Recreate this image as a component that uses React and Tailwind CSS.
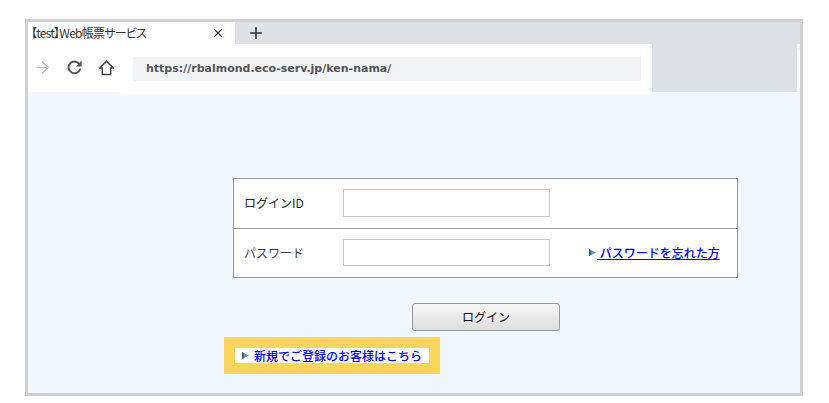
import { X, Plus, ArrowRight } from 'lucide-react'

const JP = "font-['Meiryo','Noto_Sans_CJK_JP','Liberation_Sans',sans-serif]"

function Marker() {
  return (
    <svg width="7" height="7" viewBox="0 0 8 8" className="flex-shrink-0">
      <path d="M0 0 L8 4 L0 8 Z" fill="#5b9bd5" />
      <path d="M0 0 L2 1 L2 7 L0 8 Z" fill="#44546a" />
    </svg>
  )
}

function ReloadIcon() {
  return (
    <svg width="15" height="15" viewBox="0 0 15 15" fill="none">
      <path d="M12.4 4.2 A5.9 5.9 0 1 0 13.2 8.6" stroke="#555" strokeWidth="2" />
      <path d="M14.6 0.8 V6.6 H8.8 Z" fill="#555" />
    </svg>
  )
}

function HomeIcon() {
  return (
    <svg width="15" height="16" viewBox="0 0 15 16" fill="none" stroke="#444" strokeWidth="1.5">
      <path d="M0.9 8 L7.5 1.2 L14.1 8 H11.7 V14.6 H3.3 V8 Z" />
    </svg>
  )
}

function Toolbar() {
  return (
    <div className="flex items-start h-[50px]">
      <div className="w-[92px] h-[48px] bg-white flex items-center pl-[5px] pb-[1px] flex-shrink-0">
        <ArrowRight size={19} strokeWidth={1.5} className="text-[#bdbdbd]" />
        <span className="ml-[15px] flex"><ReloadIcon /></span>
        <span className="ml-[17px] flex"><HomeIcon /></span>
      </div>
      <div className="w-[532px] h-[50px] bg-white pt-[13px] flex-shrink-0">
        <div className="ml-[13px] w-[508px] h-[24px] bg-[#f1f3f4] flex items-center pl-[13px]">
          <span className="font-['DejaVu_Sans',sans-serif] font-bold text-[11px] text-[#555]">https://rbalmond.eco-serv.jp/ken-nama/</span>
        </div>
      </div>
      <div className="w-[145px] h-[48px] bg-[#dee1e6] flex-shrink-0" />
      <div className="flex-1 h-[47px] pt-[6px]">
        <div className="h-[41px] bg-white" />
      </div>
    </div>
  )
}

function FormRow({ label, last, children, labelClass }) {
  return (
    <div className={`flex items-center bg-white ${last ? 'h-[48px] pb-[1px]' : 'h-[50px] pb-[1px] border-b border-[#999]'}`}>
      <span className={`w-[109px] pl-[10px] text-[12px] ${labelClass}`}>{label}</span>
      <input type="text" className={`w-[207px] bg-white border border-[#c8c8c8] ${last ? 'h-[27px]' : 'h-[28px]'}`} />
      {children}
    </div>
  )
}

export default function App() {
  return (
    <div className={`w-[829px] h-[403px] bg-white pt-[19px] pl-[25px] overflow-hidden ${JP}`}>
      <div className="w-[778px] h-[377px] border-[3px] border-[#d0d0d0] bg-[#f3f8fe] flex flex-col">
        <div className="h-[22px] bg-[#dee1e6] flex items-center flex-shrink-0">
          <div className="w-[207px] h-full bg-white flex items-center pl-[3px] pr-[10px] justify-between">
            <span className="text-[12px] text-[#333] whitespace-nowrap tracking-[-0.75px] [font-feature-settings:'palt']">【test】Web帳票サービス</span>
            <X size={14} strokeWidth={2} className="text-[#333]" />
          </div>
          <Plus size={18} strokeWidth={2.2} className="text-[#333] ml-[12px]" />
        </div>
        <Toolbar />

        <div className="flex flex-col pt-[84px]">
          <div className="ml-[205px] w-[505px] h-[100px] border border-[#999] bg-white flex flex-col">
            <FormRow label="ログインID" labelClass="text-[#222]" />
            <FormRow label="パスワード" labelClass="text-[#444]" last>
              <a href="#" className="ml-[39px] flex items-center text-[12px] font-medium text-[#0000ff] whitespace-nowrap">
                <Marker />
                <span className="underline ml-[1px]">&nbsp;パスワードを忘れた方</span>
              </a>
            </FormRow>
          </div>

          <button className="ml-[384px] mt-[25px] w-[148px] h-[28px] rounded-[3px] border border-[#999] bg-gradient-to-b from-[#f6f6f6] to-[#dedede] text-[12px] text-[#111]">
            ログイン
          </button>

          <div className="ml-[196px] mt-[6px] w-[216px] h-[37px] bg-[#f9d55b] p-[11px]">
            <a href="#" className="h-[15px] bg-white flex items-center pl-[7px] text-[12px] font-medium text-[#0000ff] whitespace-nowrap">
              <Marker />
              <span className="ml-[5px]">新規でご登録のお客様はこちら</span>
            </a>
          </div>
        </div>
      </div>
    </div>
  )
}
